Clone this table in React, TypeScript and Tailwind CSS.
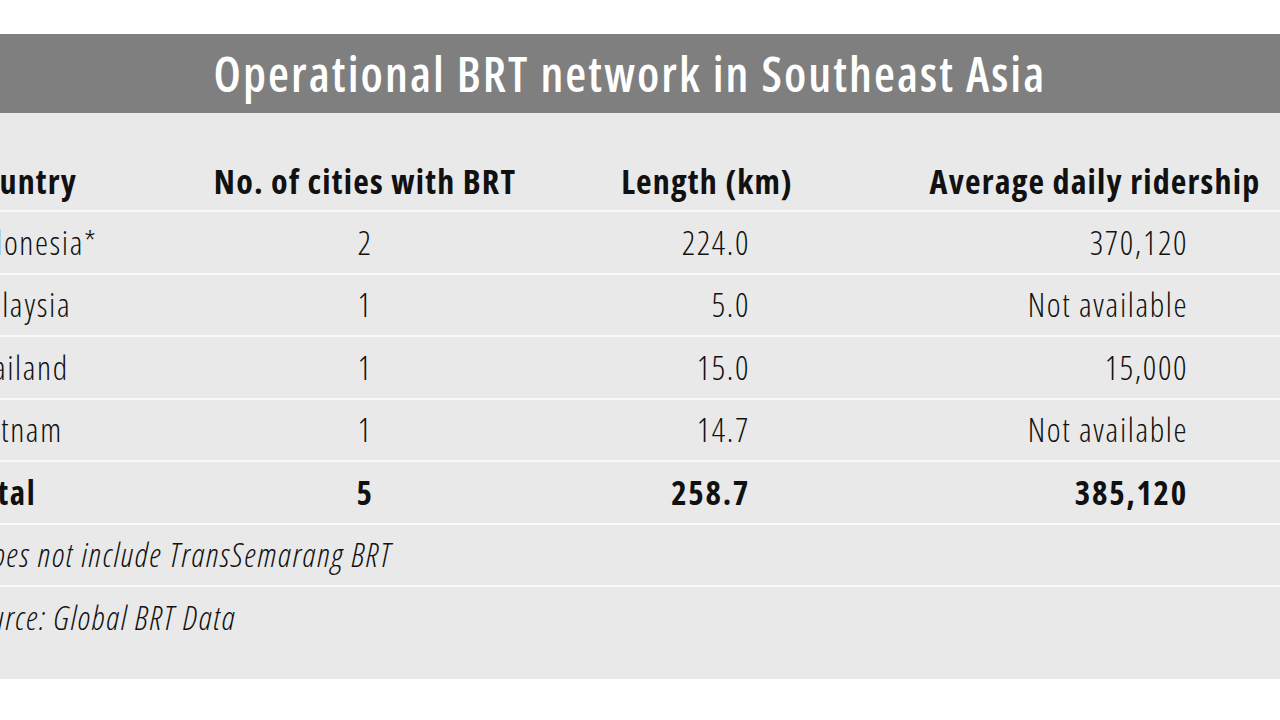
import React from "react";

const rows = [
  { country: "Indonesia*", cities: "2", length: "224.0", riders: "370,120" },
  { country: "Malaysia", cities: "1", length: "5.0", riders: "Not available" },
  { country: "Thailand", cities: "1", length: "15.0", riders: "15,000" },
  { country: "Vietnam", cities: "1", length: "14.7", riders: "Not available" },
];

const cols = "grid grid-cols-[216px_370px_314px_462px] w-[1362px] ml-[-36px]";
const cell = "text-[33px] leading-none font-light tracking-[1.6px]";
const bold = "text-[33px] leading-none font-bold tracking-[1.7px]";

const Row: React.FC<{ children: React.ReactNode; last?: boolean }> = ({ children, last }) => (
  <div className={`border-t-2 border-[#f9f9f9] ${last ? "h-[94px] pb-[32px]" : "h-[62.5px]"}`}>
    <div className={`${cols} h-full items-center`}>{children}</div>
  </div>
);

export default function App() {
  return (
    <div
      className="w-[1280px] h-[720px] bg-white overflow-hidden pt-[34px] text-[#111]"
      style={{ fontFamily: "'Open Sans', sans-serif", fontStretch: "75%" }}
    >
      <div className="h-[79px] bg-[#7f7f7f] flex items-center justify-center pr-[20px]">
        <h1 className="text-white text-[48px] font-semibold leading-none tracking-[2.1px]">
          Operational BRT network in Southeast Asia
        </h1>
      </div>
      <div className="bg-[#e9e9e9] overflow-hidden">
        <div className="h-[97px] pb-[12px] flex items-end">
          <div className={`${cols} text-[34px] font-bold leading-none tracking-[1.2px]`}>
            <div>Country</div>
            <div className="text-center">No. of cities with BRT</div>
            <div className="text-center">Length (km)</div>
            <div className="text-center">Average daily ridership</div>
          </div>
        </div>
        {rows.map((r) => (
          <Row key={r.country}>
            <div className={cell}>{r.country}</div>
            <div className={`${cell} text-center`}>{r.cities}</div>
            <div className={`${cell} text-right pr-[114px]`}>{r.length}</div>
            <div className={`${cell} text-right pr-[138px]`}>{r.riders}</div>
          </Row>
        ))}
        <Row>
          <div className={bold}>Total</div>
          <div className={`${bold} text-center`}>5</div>
          <div className={`${bold} text-right pr-[114px]`}>258.7</div>
          <div className={`${bold} text-right pr-[138px]`}>385,120</div>
        </Row>
        <Row>
          <div className={`${cell} col-span-4 italic`}>*Does not include TransSemarang BRT</div>
        </Row>
        <Row last>
          <div className={`${cell} col-span-4 italic`}>Source: Global BRT Data</div>
        </Row>
      </div>
    </div>
  );
}
